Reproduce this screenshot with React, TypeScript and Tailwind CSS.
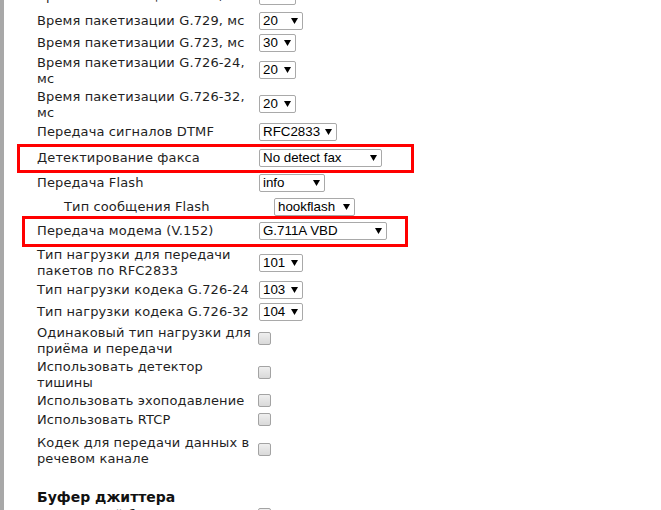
import React from 'react';

type SelProps = { value: string; w: number; cls?: string };

// native-looking select box with a solid triangle arrow
function Sel({ value, w, cls = '' }: SelProps) {
  return (
    <div
      className={`flex h-[18px] flex-none items-center justify-between rounded-[2px] border border-[#a9a9a9] bg-white pl-[3px] pr-[4px] font-['Liberation_Sans',Arial,sans-serif] text-[13.33px] leading-[16px] tracking-normal text-black ${cls}`}
      style={{ width: w }}
    >
      <span className="whitespace-nowrap">{value}</span>
      <svg width="7" height="6" viewBox="0 0 7 6" className="flex-none">
        <polygon points="0,0 7,0 3.5,6" fill="#000" />
      </svg>
    </div>
  );
}

function Check({ cls = '' }: { cls?: string }) {
  return (
    <div
      className={`ml-[-1px] h-[13px] w-[13px] flex-none rounded-[2px] border border-[#a3a3a3] bg-gradient-to-b from-[#efefef] to-[#d9d9d9] ${cls}`}
    />
  );
}

const label = "w-[222px] flex-none whitespace-nowrap text-[13px] leading-[16px] tracking-[0.12px]";

export default function App() {
  return (
    <div className="flex min-h-[510px] overflow-hidden bg-white font-['DejaVu_Sans',Verdana,sans-serif] text-[#1f1f1f]">
      {/* left grey edge */}
      <div className="w-[4px] flex-none bg-[#a8a8a8]" />

      <div className="flex flex-col pl-[33px]">
        <div className="mt-[-13px] flex h-[18px] items-center">
          <div className={label}>Время пакетизации G.711, мс</div>
          <Sel value="20" w={37} />
        </div>
        <div className="mt-[7px] flex h-[18px] items-center">
          <div className={label}>Время пакетизации G.729, мс</div>
          <Sel value="20" w={44} />
        </div>
        <div className="mt-[4px] flex h-[18px] items-center">
          <div className={label}>Время пакетизации G.723, мс</div>
          <Sel value="30" w={37} />
        </div>
        <div className="mt-[3px] flex h-[32px] items-center">
          <div className={label}>
            Время пакетизации G.726-24,
            <br />
            мс
          </div>
          <Sel value="20" w={37} cls="mb-[2px]" />
        </div>
        <div className="mt-[2px] flex h-[32px] items-center">
          <div className={label}>
            Время пакетизации G.726-32,
            <br />
            мс
          </div>
          <Sel value="20" w={37} cls="mb-[2px]" />
        </div>
        <div className="mt-[2px] flex h-[18px] items-center">
          <div className={label}>Передача сигналов DTMF</div>
          <Sel value="RFC2833" w={78} />
        </div>

        <div className="relative mt-[8px] flex h-[18px] items-center">
          <div className={label}>Детектирование факса</div>
          <Sel value="No detect fax" w={123} />
          <div className="absolute left-[-20px] top-[-5px] h-[29px] w-[397px] border-[3px] border-[#ff0000]" />
        </div>

        <div className="mt-[7px] flex h-[18px] items-center">
          <div className={label}>Передача Flash</div>
          <Sel value="info" w={66} />
        </div>
        <div className="mt-[6px] flex h-[18px] items-center">
          <div className={`${label} pl-[27px]`}>Тип сообщения Flash</div>
          <Sel value="hookflash" w={81} cls="ml-[15px]" />
        </div>

        <div className="relative mt-[6px] flex h-[18px] items-center">
          <div className={label}>Передача модема (V.152)</div>
          <Sel value="G.711A VBD" w={128} />
          <div className="absolute left-[-15px] top-[-6px] h-[31px] w-[386px] border-[3px] border-[#ff0000]" />
        </div>

        <div className="mt-[7px] flex h-[32px] items-center">
          <div className={label}>
            Тип нагрузки для передачи
            <br />
            пакетов по RFC2833
          </div>
          <Sel value="101" w={44} cls="mb-[1px]" />
        </div>
        <div className="mt-[2px] flex h-[18px] items-center">
          <div className={label}>Тип нагрузки кодека G.726-24</div>
          <Sel value="103" w={44} />
        </div>
        <div className="mt-[4px] flex h-[18px] items-center">
          <div className={label}>Тип нагрузки кодека G.726-32</div>
          <Sel value="104" w={44} />
        </div>

        <div className="mt-[4px] flex h-[32px] items-start">
          <div className={label}>
            Одинаковый тип нагрузки для
            <br />
            приёма и передачи
          </div>
          <Check cls="mt-[7px]" />
        </div>
        <div className="mt-[2px] flex h-[32px] items-start">
          <div className={label}>
            Использовать детектор
            <br />
            тишины
          </div>
          <Check cls="mt-[7px]" />
        </div>
        <div className="mt-[2px] flex h-[16px] items-start">
          <div className={label}>Использовать эхоподавление</div>
          <Check cls="mt-[1px]" />
        </div>
        <div className="mt-[3px] flex h-[16px] items-start">
          <div className={label}>Использовать RTCP</div>
          <Check cls="mt-[1px]" />
        </div>
        <div className="mt-[7px] flex h-[32px] items-start">
          <div className={label}>
            Кодек для передачи данных в
            <br />
            речевом канале
          </div>
          <Check cls="mt-[8px]" />
        </div>

        <div className="mt-[21px] h-[18px] text-[14px] font-bold leading-[18px] text-[#111]">
          Буфер джиттера
        </div>
        <div className="mt-[1px] flex h-[16px] items-start">
          <div className={label}>Адаптивный буфер</div>
          <Check cls="mt-[1px]" />
        </div>
      </div>
    </div>
  );
}
